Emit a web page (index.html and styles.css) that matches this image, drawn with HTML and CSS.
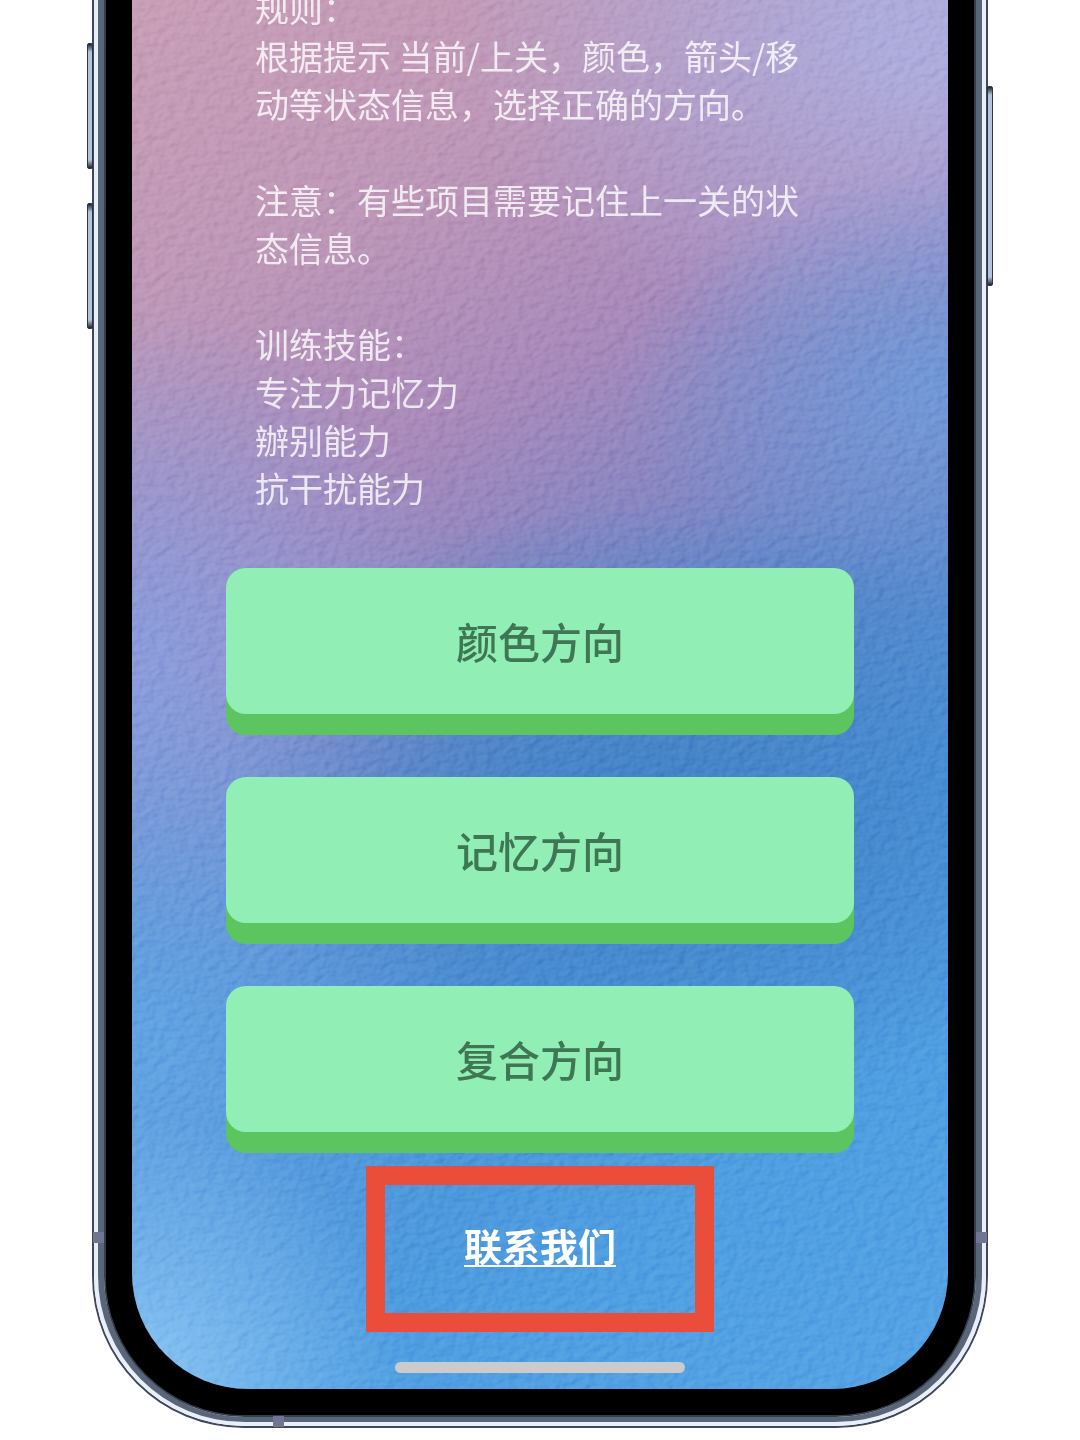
FILE: index.html
```html
<!DOCTYPE html>
<html lang="zh-CN">
<head>
<meta charset="utf-8">
<meta name="viewport" content="width=device-width, initial-scale=1">
<title>方向训练</title>
<link rel="stylesheet" href="styles.css">
</head>
<body>
<div class="phone">
  <span class="key key-volume-up"></span>
  <span class="key key-volume-down"></span>
  <span class="key key-power"></span>
  <span class="antenna antenna-left"></span>
  <span class="antenna antenna-right"></span>
  <span class="antenna antenna-bottom"></span>
  <div class="ring ring-edge"><div class="ring ring-shine"><div class="ring ring-band"><div class="ring ring-shade"><div class="ring ring-bezel">
    <main class="screen">
      <svg class="texture" aria-hidden="true">
        <filter id="plaster" x="0" y="0" width="100%" height="100%" color-interpolation-filters="sRGB">
          <feTurbulence type="fractalNoise" baseFrequency="0.1 0.13" numOctaves="2" seed="8"/>
          <feDiffuseLighting surfaceScale="2" diffuseConstant="0.7" lighting-color="#fff">
            <feDistantLight azimuth="215" elevation="45"/>
          </feDiffuseLighting>
        </filter>
        <rect width="100%" height="100%" filter="url(#plaster)"/>
      </svg>
      <section class="intro">
        <p>规则：<br>根据提示 当前/上关，颜色，箭头/移动等状态信息，选择正确的方向。</p>
        <p>注意：有些项目需要记住上一关的状态信息。</p>
        <p>训练技能：<br>专注力记忆力<br>辦别能力<br>抗干扰能力</p>
      </section>
      <div class="modes">
        <button class="mode" type="button">颜色方向</button>
        <button class="mode" type="button">记忆方向</button>
        <button class="mode" type="button">复合方向</button>
      </div>
      <div class="contact"><a class="contact-link" href="#contact">联系我们</a></div>
      <div class="home-bar"></div>
    </main>
  </div></div></div></div></div>
</div>
</body>
</html>
```
FILE: styles.css
```css
* { box-sizing: border-box; }

body {
  margin: 0;
  background: #fff;
  font-family: "Noto Sans CJK SC", sans-serif;
}

/* Phone body */
.phone {
  position: relative;
  margin: 0 92px;
}

.ring {
  border: solid;
  border-top: 0;
}
.ring-edge {
  border-width: 0 2px 2px;
  border-color: #3e475b;
  border-radius: 0 0 152px 152px;
}
.ring-shine {
  border-width: 0 4px 4px;
  border-color: #e9eff9;
  border-radius: 0 0 150px 150px;
}
.ring-band {
  border-width: 0 6px 5px;
  border-color: #59667a;
  border-radius: 0 0 146px 146px;
}
.ring-shade {
  border-width: 0 2px 2px;
  border-color: #353d4b;
  border-radius: 0 0 140px 140px;
  background: #000;
}
.ring-bezel {
  border-width: 0 26px 26px;
  border-color: #000;
  border-radius: 0 0 138px 138px;
}

.key {
  position: absolute;
  width: 6px;
  border: 1px solid #2c3446;
  border-radius: 2px;
  background: linear-gradient(#1d2536, #b4c2da 8px, #b4c2da calc(100% - 8px), #1d2536);
}
.key-volume-up { left: -5px; top: 43px; height: 126px; }
.key-volume-down { left: -5px; top: 203px; height: 126px; }
.key-power { right: -5px; top: 86px; height: 200px; }

.antenna {
  position: absolute;
  width: 11px;
  height: 11px;
  background: #717592;
}
.antenna-left { left: 1px; top: 1232px; }
.antenna-right { right: 1px; top: 1232px; }
.antenna-bottom { left: 181px; bottom: 1px; }

/* Screen */
.screen {
  position: relative;
  isolation: isolate;
  display: flex;
  flex-direction: column;
  overflow: hidden;
  padding-bottom: 16px;
  border-radius: 0 0 116px 116px;
  background:
    radial-gradient(ellipse 34% 20% at 0% 100%, #8cc6f4, #8cc6f400),
    radial-gradient(ellipse 42% 28% at 0% 76%, #62a3e2 10%, #62a3e200),
    radial-gradient(ellipse 55% 22% at 65% 58%, #4585c8 10%, #4585c800),
    radial-gradient(ellipse 40% 16% at 100% 28%, #7298d6 5%, #7298d600),
    radial-gradient(ellipse 60% 24% at 100% 2%, #aeacdb 15%, #aeacdb00),
    radial-gradient(ellipse 42% 26% at 0% 48%, #8c9cda 10%, #8c9cda00),
    linear-gradient(150deg, #c99fb7 0%, #be98b8 18%, #a88abb 33%, #8587c3 44%, #5c89cc 54%, #4b92d8 66%, #509fe1 82%, #56a4e5 100%);
}

.texture {
  position: absolute;
  inset: 0;
  z-index: -1;
  width: 100%;
  height: 100%;
  mix-blend-mode: soft-light;
  opacity: 0.4;
}

.intro {
  display: flex;
  flex-direction: column;
  gap: 48px;
  margin-top: -16px;
  padding: 0 140px 0 123px;
  color: rgba(255, 255, 255, 0.8);
  font-size: 34px;
  line-height: 48px;
}
.intro p { margin: 0; }

.modes {
  display: flex;
  flex-direction: column;
  gap: 63px;
  margin: 56px 94px 0;
}
.mode {
  height: 146px;
  padding: 0;
  border: 0;
  border-radius: 20px;
  background: #91efb5;
  box-shadow: 0 21px 0 #5cc560;
  color: #3f7654;
  font: 500 42px/60px "Noto Sans CJK SC", sans-serif;
}

.contact {
  display: flex;
  justify-content: center;
  align-self: center;
  width: 348px;
  height: 166px;
  margin-top: 34px;
  padding-top: 32px;
  border: 19px solid #eb4d3b;
}
.contact-link {
  color: #fff;
  font-size: 38px;
  font-weight: 700;
  line-height: 56px;
  text-decoration: underline 2px;
  text-underline-offset: 4px;
}

.home-bar {
  align-self: center;
  width: 290px;
  height: 11px;
  margin-top: 30px;
  border-radius: 6px;
  background: #cbcbcd;
}
```
